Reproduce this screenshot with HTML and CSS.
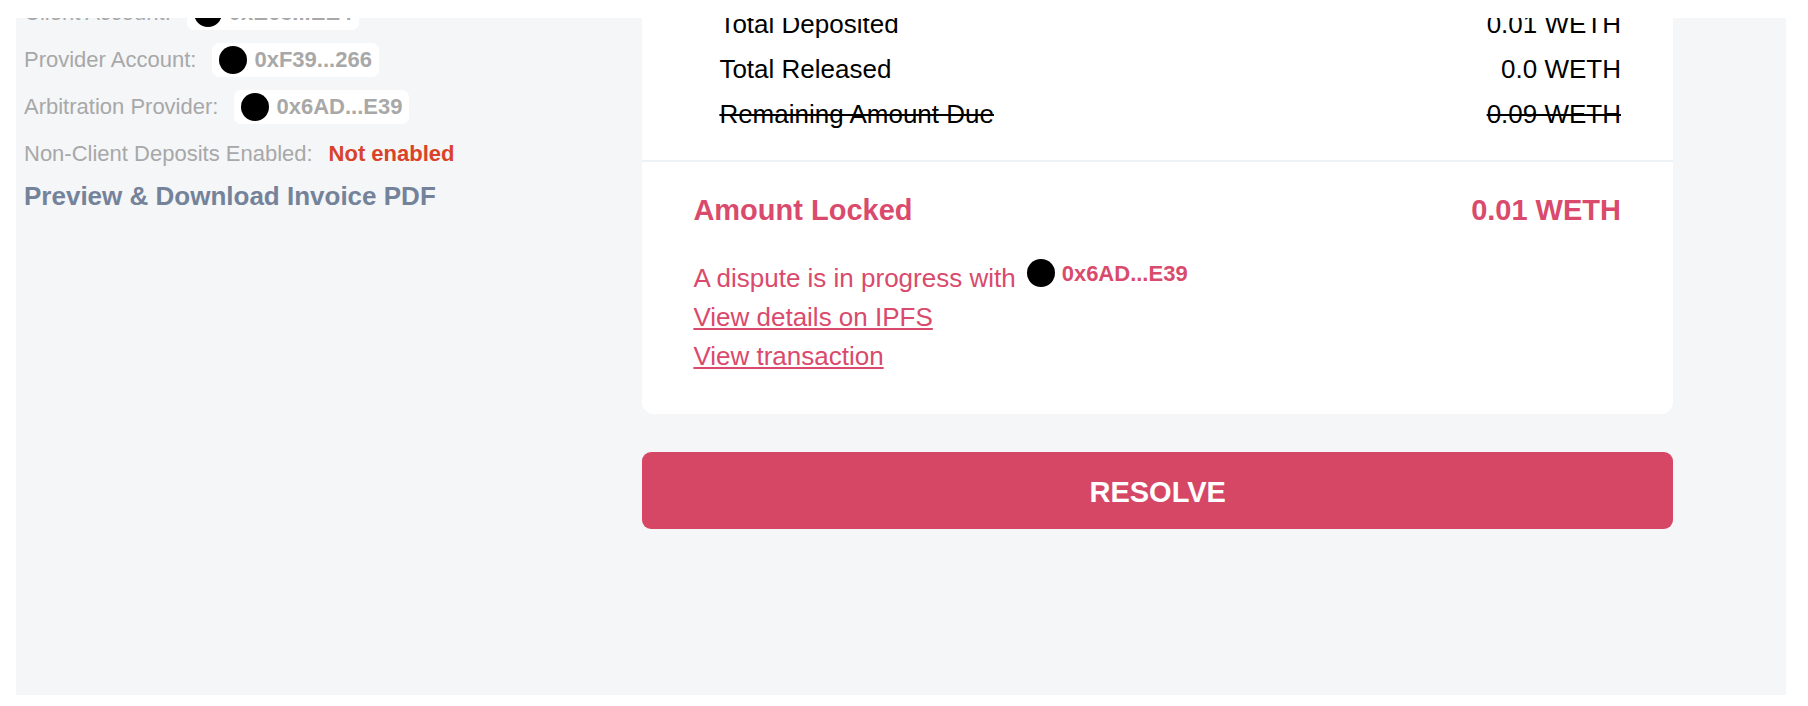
FILE: index.html
```html
<!DOCTYPE html>
<html lang="en">
<head>
<meta charset="utf-8">
<title>Invoice</title>
<link rel="stylesheet" href="styles.css">
</head>
<body>
<main class="page">
  <div class="content">
    <section class="details">
      <dl class="facts">
        <div class="fact"><dt>Client Account:</dt><dd class="account"><span class="avatar"></span>0xE63...EE4</dd></div>
        <div class="fact"><dt>Provider Account:</dt><dd class="account"><span class="avatar"></span>0xF39...266</dd></div>
        <div class="fact"><dt>Arbitration Provider:</dt><dd class="account"><span class="avatar"></span>0x6AD...E39</dd></div>
        <div class="fact"><dt>Non-Client Deposits Enabled:</dt><dd class="status">Not enabled</dd></div>
      </dl>
      <button class="download" type="button">Preview &amp; Download Invoice PDF</button>
    </section>
    <section class="summary">
      <div class="card">
        <dl class="totals">
          <div class="total"><dt>Total Deposited</dt><dd>0.01 WETH</dd></div>
          <div class="total"><dt>Total Released</dt><dd>0.0 WETH</dd></div>
          <div class="total due"><dt>Remaining Amount Due</dt><dd>0.09 WETH</dd></div>
        </dl>
        <div class="locked">
          <div class="locked-amount"><span>Amount Locked</span><span>0.01 WETH</span></div>
          <div class="dispute">
            <p class="dispute-text">A dispute is in progress with <span class="account plain"><span class="avatar"></span>0x6AD...E39</span></p>
            <a href="#ipfs">View details on IPFS</a>
            <a href="#transaction">View transaction</a>
          </div>
        </div>
      </div>
      <button class="resolve" type="button">RESOLVE</button>
    </section>
  </div>
</main>
</body>
</html>
```
FILE: styles.css
```css
* {
  box-sizing: border-box;
}

body {
  margin: 0;
  padding: 18px 22px 11px 16px;
  min-height: 100vh;
  display: flex;
  background: #fff;
  font-family: "Liberation Sans", Arial, sans-serif;
}

dl,
dd,
p {
  margin: 0;
}

button {
  border: 0;
  font-family: inherit;
  font-weight: 700;
  cursor: pointer;
}

.page {
  flex: 1;
  overflow: hidden;
  background: #f4f6f8;
}

.content {
  display: grid;
  grid-template-columns: 3fr 5fr;
  margin-top: -22px;
  padding: 0 113px 0 8px;
}

.facts {
  display: grid;
  gap: 13px;
}

.fact {
  display: flex;
  align-items: center;
  gap: 16px;
  height: 34px;
  font-size: 22px;
  color: #a8a8a8;
}

.account {
  display: inline-flex;
  align-items: center;
  gap: 7px;
  height: 34px;
  padding: 0 7px;
  border-radius: 7px;
  background: #fff;
  font-size: 22px;
  font-weight: 700;
}

.avatar {
  width: 28px;
  height: 28px;
  border-radius: 50%;
  background: #000;
}

.status {
  font-weight: 700;
  color: #d8432a;
}

.download {
  margin-top: 10px;
  padding: 0;
  background: none;
  font-size: 26px;
  line-height: 30px;
  color: #75839a;
}

.card {
  border-radius: 0 0 12px 12px;
  background: #fff;
}

.totals {
  display: grid;
  gap: 15px;
  padding: 13px 52px 31px 77px;
  border-bottom: 2px solid #edf2f7;
  font-size: 26px;
  line-height: 30px;
  color: #000;
}

.total,
.locked-amount {
  display: flex;
  justify-content: space-between;
}

.due {
  text-decoration: line-through;
}

.locked {
  padding: 31px 52px 38px 51px;
  color: #d94a6c;
}

.locked-amount {
  font-size: 29px;
  font-weight: 700;
  line-height: 34px;
}

.dispute {
  display: flex;
  flex-direction: column;
  align-items: flex-start;
  padding-top: 32px;
  font-size: 26px;
  line-height: 39px;
}

.dispute-text {
  display: flex;
}

.plain {
  height: 28px;
  margin-left: 4px;
}

.dispute a {
  color: inherit;
}

.resolve {
  width: 100%;
  height: 77px;
  margin-top: 38px;
  padding-top: 4px;
  border-radius: 9px;
  background: #d64766;
  font-size: 29px;
  color: #fff;
}
```
